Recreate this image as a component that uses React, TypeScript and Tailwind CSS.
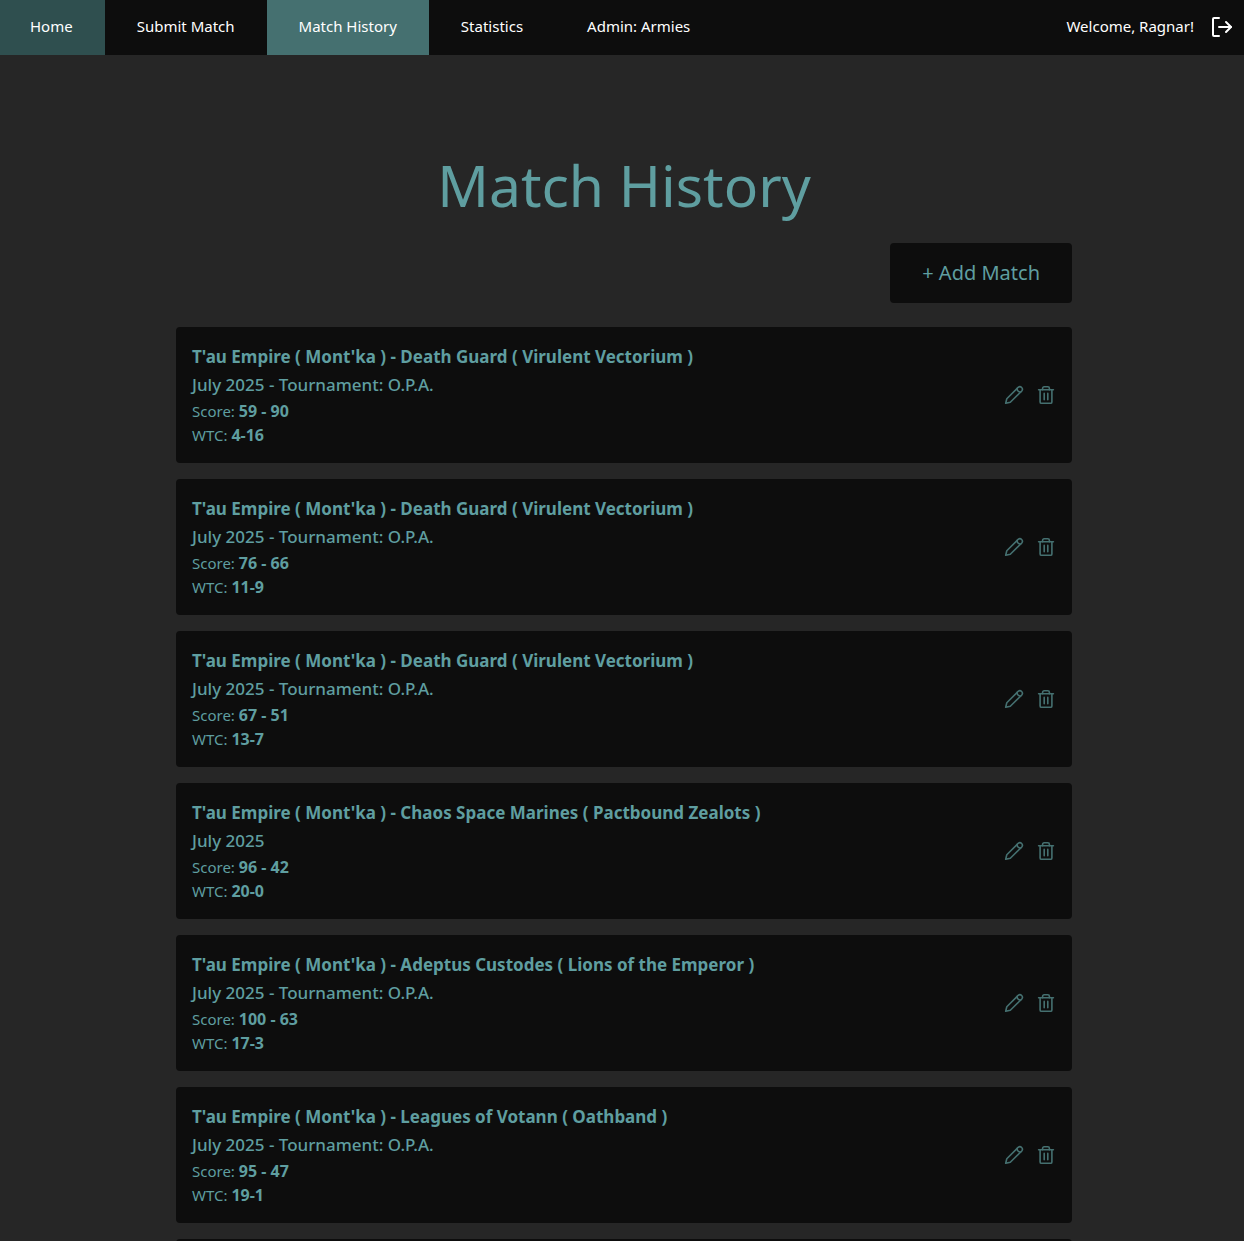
type Match = { title: string; event: string; score: string; wtc: string };

const opa = "July 2025 - Tournament: O.P.A.";
const matches: Match[] = [
  { title: "T'au Empire ( Mont'ka ) - Death Guard ( Virulent Vectorium )", event: opa, score: "59 - 90", wtc: "4-16" },
  { title: "T'au Empire ( Mont'ka ) - Death Guard ( Virulent Vectorium )", event: opa, score: "76 - 66", wtc: "11-9" },
  { title: "T'au Empire ( Mont'ka ) - Death Guard ( Virulent Vectorium )", event: opa, score: "67 - 51", wtc: "13-7" },
  { title: "T'au Empire ( Mont'ka ) - Chaos Space Marines ( Pactbound Zealots )", event: "July 2025", score: "96 - 42", wtc: "20-0" },
  { title: "T'au Empire ( Mont'ka ) - Adeptus Custodes ( Lions of the Emperor )", event: opa, score: "100 - 63", wtc: "17-3" },
  { title: "T'au Empire ( Mont'ka ) - Leagues of Votann ( Oathband )", event: opa, score: "95 - 47", wtc: "19-1" },
  { title: "T'au Empire ( Mont'ka ) - Leagues of Votann ( Oathband )", event: opa, score: "95 - 47", wtc: "19-1" },
];

function LogoutIcon() {
  return (
    <svg className="size-6" viewBox="0 0 24 24" fill="none" stroke="currentColor" strokeWidth="2" strokeLinecap="round" strokeLinejoin="round" aria-hidden="true">
      <path d="M9 3H4a1 1 0 0 0-1 1v16a1 1 0 0 0 1 1h5" />
      <path d="M9 12h12" />
      <path d="m16 7 5 5-5 5" />
    </svg>
  );
}

function PencilIcon() {
  return (
    <svg className="size-5" viewBox="0 0 20 20" fill="none" stroke="currentColor" strokeWidth="1.6" strokeLinecap="round" strokeLinejoin="round" aria-hidden="true">
      <path d="M1.7 18.3 2.8 13.7 14.2 2.3a2.6 2.6 0 0 1 3.6 3.7L6.3 17.2Z" />
      <path d="M13.2 3.4c-.3 2.1 1.2 3.7 3.5 3.6" />
    </svg>
  );
}

function TrashIcon() {
  return (
    <svg className="size-5" viewBox="0 0 20 20" fill="none" stroke="currentColor" strokeWidth="1.6" strokeLinecap="round" strokeLinejoin="round" aria-hidden="true">
      <path d="M2.6 4.8h14.8" />
      <path d="M6.6 4.8V3.4c0-1 .6-1.6 1.6-1.6h3.6c1 0 1.6.6 1.6 1.6v1.4" />
      <path d="M4.1 4.8v12.1c0 .8.6 1.4 1.4 1.4h9c.8 0 1.4-.6 1.4-1.4V4.8" />
      <path d="M8.2 8.4v6.4M11.8 8.4v6.4" />
    </svg>
  );
}

export default function App() {
  return (
    <div className="h-screen overflow-y-auto bg-[#262626] font-['Segoe_UI','Noto_Sans',sans-serif] text-[#5f9ea0] [scrollbar-width:none]">
      <header className="flex h-[55px] items-stretch justify-between bg-[#0d0d0d] text-[15px] text-white">
        <nav className="flex">
          <a href="#" className="flex items-center bg-[#2f4f4f] pr-8 pb-0.5 pl-[30px]">Home</a>
          <a href="#" className="flex items-center px-8 pb-0.5">Submit Match</a>
          <a href="#" aria-current="page" className="flex items-center bg-[#457070] px-8 pb-0.5">Match History</a>
          <a href="#" className="flex items-center px-8 pb-0.5">Statistics</a>
          <a href="#" className="flex items-center px-8 pb-0.5">Admin: Armies</a>
        </nav>
        <div className="flex items-center gap-4 pr-2.5 pb-0.5">
          <span>Welcome, Ragnar!</span>
          <button aria-label="Log out"><LogoutIcon /></button>
        </div>
      </header>
      <div className="pt-[92px] pb-4 pl-1">
        <main className="mx-auto flex max-w-4xl flex-col">
          <h1 className="text-center text-[57px] leading-[76px]">Match History</h1>
          <button className="mt-5 h-[60px] self-end rounded bg-[#0d0d0d] px-8 text-xl">+ Add Match</button>
          <ul className="mt-6 flex flex-col gap-4">
            {matches.map((m, i) => (
              <li key={i} className="flex items-center justify-between rounded bg-[#0d0d0d] p-4">
                <div>
                  <h2 className="text-[17px] leading-7 font-bold">{m.title}</h2>
                  <p className="text-[17px] leading-7 font-medium">{m.event}</p>
                  <p className="text-[15px] leading-6">Score: <b className="text-base">{m.score}</b></p>
                  <p className="text-[15px] leading-6">WTC: <b className="text-base">{m.wtc}</b></p>
                </div>
                <div className="flex gap-3 text-[#457070]">
                  <button aria-label="Edit match"><PencilIcon /></button>
                  <button aria-label="Delete match"><TrashIcon /></button>
                </div>
              </li>
            ))}
          </ul>
        </main>
      </div>
    </div>
  );
}
